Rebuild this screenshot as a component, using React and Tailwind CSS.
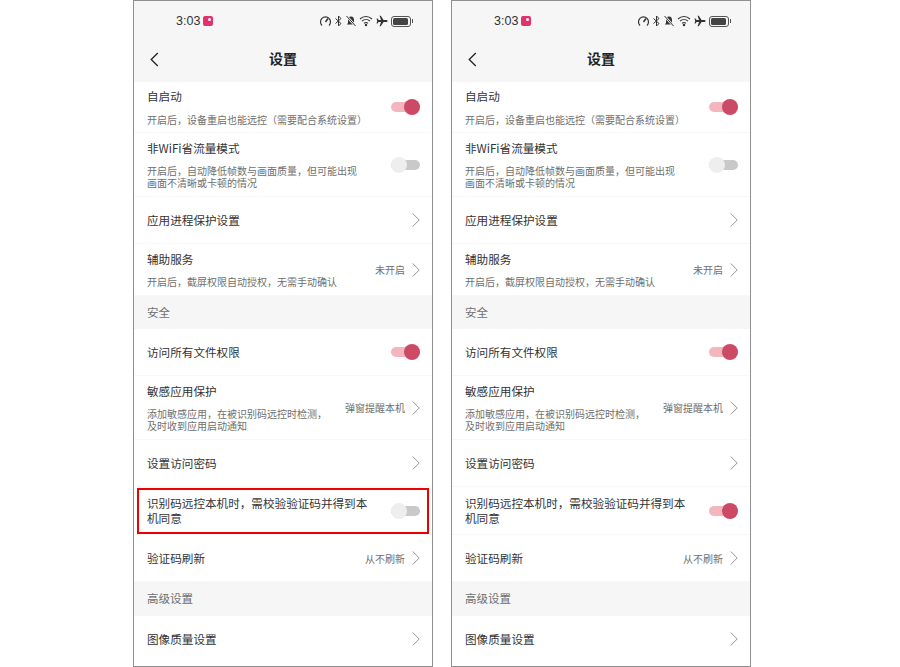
import React from "react";

const font = { fontFamily: '"Noto Sans CJK SC", "Noto Sans", sans-serif' };

function Chevron() {
  return (
    <svg width="8" height="16" viewBox="0 0 8 16" fill="none" className="shrink-0">
      <path d="M0.7 1.5 L7.2 8 L0.7 14.5" stroke="#959595" strokeWidth="1" />
    </svg>
  );
}

function Toggle({ on }) {
  return on ? (
    <div className="relative w-[29px] h-[10px] bg-[#f3b6bf] rounded-full shrink-0">
      <div className="absolute right-0 top-[-3px] w-[16px] h-[16px] rounded-full bg-[#cc4a66]" />
    </div>
  ) : (
    <div className="relative w-[29px] h-[10px] bg-[#c9c9c9] rounded-full shrink-0">
      <div className="absolute left-0 top-[-3px] w-[16px] h-[16px] rounded-full bg-[#eeeeee]" />
    </div>
  );
}

function Row({ h, title, sub, toggle, value, chevron, last, subW, tight }) {
  return (
    <div className={`flex items-center pl-[13px] pr-[12px] bg-white ${h} ${last ? "" : "border-b border-[#f8f8f8]"}`}>
      <div className={`flex-1 min-w-0 ${sub && !tight ? "pt-[1px]" : ""}`}>
        <div className="text-[11.6px] leading-[15px] text-[#333333]">{title}</div>
        {sub && <div className={`${tight ? "mt-[10px]" : "mt-[9px]"} text-[10px] leading-[12px] text-[#6f6f6f] ${subW || ""}`}>{sub}</div>}
      </div>
      {value && <span className="text-[10px] text-[#6f6f6f] mr-[7px] whitespace-nowrap">{value}</span>}
      {chevron && <Chevron />}
      {toggle !== undefined && <Toggle on={toggle} />}
    </div>
  );
}

function Section({ children, h }) {
  return (
    <div className={`flex items-center pl-[13px] bg-[#f6f6f6] text-[11.5px] text-[#6f6f6f] ${h}`}>
      {children}
    </div>
  );
}

function StatusIcons() {
  return (
    <div className="flex items-center gap-[2px]">
      <svg width="13" height="12" viewBox="0 0 13 12" fill="none" stroke="#333" strokeWidth="1.2">
        <path d="M3 10.5 A5 5 0 1 1 10 10.5" /><path d="M6.5 7 L9 3.5" strokeWidth="1.5" />
      </svg>
      <svg width="9" height="12" viewBox="0 0 9 12" fill="none" stroke="#333" strokeWidth="1">
        <path d="M1.5 3.5 L7 8.5 L4.5 11 V1 L7 3.5 L1.5 8.5" />
      </svg>
      <svg width="12" height="12" viewBox="0 0 12 12">
        <path d="M6 1.5 C3.8 1.5 3 3.2 3 5 V8 L1.8 9.5 H10.2 L9 8 V5 C9 3.2 8.2 1.5 6 1.5 Z" fill="#333" />
        <path d="M1.5 1 L10.5 11" stroke="#f6f6f6" strokeWidth="2.4" />
        <path d="M1.5 1 L10.5 11" stroke="#333" strokeWidth="1" />
      </svg>
      <svg width="15" height="12" viewBox="0 0 15 12" fill="none" stroke="#333" strokeWidth="1.1">
        <path d="M1 4 C4.5 0.6 9.5 0.6 13 4" /><path d="M3 6.2 C5.3 4 8.7 4 11 6.2" /><path d="M5 8.3 C6.3 7.2 7.7 7.2 9 8.3" />
        <circle cx="7" cy="10" r="0.7" fill="#333" />
      </svg>
      <svg width="12" height="12" viewBox="0 0 12 12">
        <path d="M11.6 6 C11.6 5.3 10.8 5 10 5 H7.6 L4.8 0.8 H3.6 L5 5 H2.6 L1.5 3.6 H0.5 L1.2 6 L0.5 8.4 H1.5 L2.6 7 H5 L3.6 11.2 H4.8 L7.6 7 H10 C10.8 7 11.6 6.7 11.6 6 Z" fill="#333" />
      </svg>
      <div className="flex items-center ml-[1px]">
        <div className="w-[20px] h-[11px] rounded-[3px] border border-[#555] p-[1px]">
          <div className="w-[15px] h-full rounded-[1.5px] bg-[#444]" />
        </div>
        <div className="w-[1px] h-[4px] bg-[#555] ml-[1px]" />
      </div>
    </div>
  );
}

function Phone({ highlight, lockOn }) {
  return (
    <div className="relative w-[300px] h-[667px] border border-[#8f8f8f] flex flex-col overflow-hidden bg-white" style={font}>
      <div className="bg-[#f6f6f6] h-[81px] shrink-0 flex flex-col">
        <div className="h-[39px] flex items-center justify-between pl-[42px] pr-[19px] pt-[1px]">
          <div className="flex items-center gap-[3px]">
            <span className="text-[12.5px] text-[#333]" style={{ fontFamily: '"Liberation Sans", sans-serif' }}>3:03</span>
            <div className="relative w-[10px] h-[10px] rounded-[2px] bg-[#e0336b]">
              <div className="absolute right-[2px] top-[2px] w-[3px] h-[3px] rounded-full bg-white" />
            </div>
          </div>
          <StatusIcons />
        </div>
        <div className="relative flex-1 flex items-center justify-center pb-[5px]">
          <svg width="9" height="15" viewBox="0 0 9 15" fill="none" className="absolute left-[16px] top-[12px]">
            <path d="M7.8 1 L1.2 7.5 L7.8 14" stroke="#222" strokeWidth="1.3" />
          </svg>
          <span className="text-[14px] font-bold text-[#222]">设置</span>
        </div>
      </div>
      <Row h="h-[51px]" title="自启动" sub="开启后，设备重启也能远控（需要配合系统设置）" toggle={true} tight />
      <Row h="h-[64px]" title="非WiFi省流量模式" sub="开启后，自动降低帧数与画面质量，但可能出现画面不清晰或卡顿的情况" subW="w-[212px]" toggle={false} />
      <Row h="h-[47px]" title="应用进程保护设置" chevron />
      <Row h="h-[52px]" title="辅助服务" sub="开启后，截屏权限自动授权，无需手动确认" value="未开启" chevron />
      <Section h="h-[33px]">安全</Section>
      <Row h="h-[47px]" title="访问所有文件权限" toggle={true} />
      <Row h="h-[64px]" title="敏感应用保护" sub="添加敏感应用，在被识别码远控时检测，及时收到应用启动通知" subW="w-[185px]" value="弹窗提醒本机" chevron />
      <Row h="h-[47px]" title="设置访问密码" chevron />
      <Row h="h-[48px]" title={<div className="w-[225px]">识别码远控本机时，需校验验证码并得到本机同意</div>} toggle={lockOn} />
      <Row h="h-[47px]" title="验证码刷新" value="从不刷新" chevron />
      <Section h="h-[34px]">高级设置</Section>
      <Row h="h-[46px]" title="图像质量设置" chevron last />
      {highlight && (
        <div className="absolute left-[3px] top-[487px] w-[292px] h-[46px] border-[2px] border-[#ee0000]" />
      )}
    </div>
  );
}

export default function App() {
  return (
    <div className="w-[900px] h-[667px] bg-white flex justify-start pl-[133px] gap-[18px]">
      <Phone highlight lockOn={false} />
      <Phone lockOn={true} />
    </div>
  );
}
